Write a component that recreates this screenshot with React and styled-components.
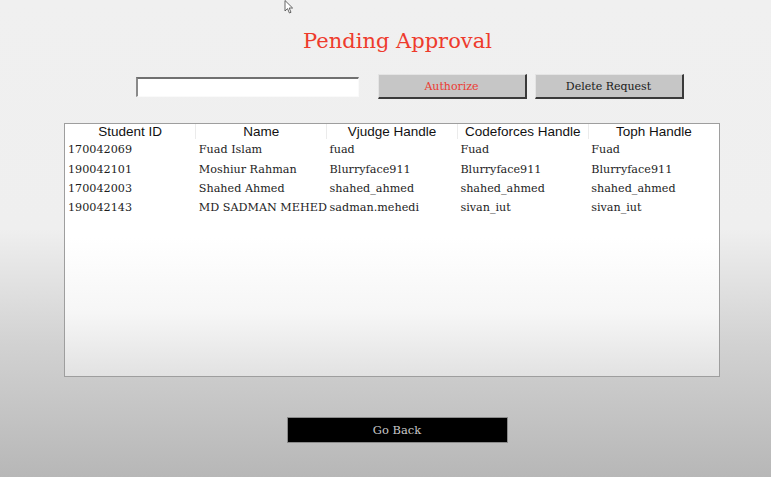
import React from "react";
import styled, { createGlobalStyle } from "styled-components";

const GlobalStyle = createGlobalStyle`
  html, body {
    margin: 0;
    padding: 0;
  }
  body {
    font-family: "DejaVu Serif", "Liberation Serif", serif;
    background: linear-gradient(to bottom, #f0f0f0 0%, #efefef 48%, #d2d2d2 72%, #b7b7b7 100%);
    min-height: 100vh;
  }
`;

const Page = styled.div`
  position: relative;
  width: 771px;
  height: 477px;
  display: flex;
  flex-direction: column;
  align-items: center;
  box-sizing: border-box;
  padding-top: 26px;
`;

const Title = styled.h1`
  margin: 0;
  font-family: "DejaVu Serif", "Liberation Serif", serif;
  font-weight: normal;
  font-size: 21px;
  color: #ee3b2c;
  line-height: 30px;
  margin-left: 24px;
`;

const Toolbar = styled.div`
  display: flex;
  align-items: center;
  margin-top: 18px;
  margin-left: 48px;
  gap: 8px;
`;

const SearchInput = styled.input`
  width: 223px;
  height: 20px;
  box-sizing: border-box;
  margin-right: 11px;
  border: none;
  border-top: 2px solid #707070;
  border-left: 2px solid #8a8a8a;
  border-bottom: 1px solid #fafafa;
  border-right: 1px solid #fafafa;
  background: #fff;
  outline: none;
`;

const ToolButton = styled.button`
  width: 149px;
  height: 25px;
  box-sizing: border-box;
  background: #c6c6c6;
  border: none;
  border-top: 1px solid #e4e4e4;
  border-left: 1px solid #e4e4e4;
  border-right: 2px solid #3a3a3a;
  border-bottom: 2px solid #3a3a3a;
  font-family: "DejaVu Serif", "Liberation Serif", serif;
  font-size: 11px;
  color: ${(p) => (p.$danger ? "#ec3a32" : "#1a1a1a")};
  padding: 0;
`;

const Panel = styled.div`
  width: 656px;
  height: 254px;
  margin-top: 24px;
  box-sizing: border-box;
  border: 1px solid #9e9e9e;
  background: linear-gradient(to bottom, #ffffff 0%, #ffffff 45%, #f6f6f6 75%, #e2e2e2 100%);
  margin-left: 13px;
`;

const Table = styled.table`
  border-collapse: collapse;
  table-layout: fixed;
  width: 100%;
`;

const HeadCell = styled.th`
  height: 15px;
  padding: 0;
  font-family: "Liberation Sans", Arial, sans-serif;
  font-weight: normal;
  font-size: 13.5px;
  color: #111;
  text-align: center;
  background: #fff;
  border-right: 1px solid #ebebeb;
  line-height: 15px;
  white-space: nowrap;
  overflow: hidden;
  &:last-child {
    border-right: none;
  }
`;

const Cell = styled.td`
  padding: 0 0 0 3px;
  height: 19.4px;
  font-size: 11.2px;
  color: #1d1d1d;
  white-space: nowrap;
  overflow: hidden;
  text-overflow: clip;
  vertical-align: middle;
`;

const FirstRow = styled.tr`
  td {
    padding-top: 1px;
  }
`;

const BackButton = styled.button`
  width: 221px;
  height: 26px;
  margin-top: 40px;
  margin-left: 23px;
  box-sizing: border-box;
  background: #000;
  border: 1px solid #8a8a8a;
  color: #c9c9c9;
  font-family: "DejaVu Serif", "Liberation Serif", serif;
  font-size: 11.5px;
  padding: 0;
`;

const Pointer = styled.svg`
  position: absolute;
  left: 284px;
  top: 0;
`;

const columns = ["Student ID", "Name", "Vjudge Handle", "Codeforces Handle", "Toph Handle"];

const rows = [
  ["170042069", "Fuad Islam", "fuad", "Fuad", "Fuad"],
  ["190042101", "Moshiur Rahman", "Blurryface911", "Blurryface911", "Blurryface911"],
  ["170042003", "Shahed Ahmed", "shahed_ahmed", "shahed_ahmed", "shahed_ahmed"],
  ["190042143", "MD SADMAN MEHEDI", "sadman.mehedi", "sivan_iut", "sivan_iut"],
];

export default function App() {
  return (
    <>
      <GlobalStyle />
      <Page>
        <Pointer width="10" height="14" viewBox="0 0 10 14">
          <path d="M1 0.5 L1 11 L3.5 8.6 L5.4 13 L7 12.3 L5.2 8 L8.6 8 Z" fill="#fff" stroke="#555" strokeWidth="0.9" />
        </Pointer>
        <Title>Pending Approval</Title>
        <Toolbar>
          <SearchInput type="text" />
          <ToolButton $danger>Authorize</ToolButton>
          <ToolButton>Delete Request</ToolButton>
        </Toolbar>
        <Panel>
          <Table>
            <thead>
              <tr>
                {columns.map((c) => (
                  <HeadCell key={c}>{c}</HeadCell>
                ))}
              </tr>
            </thead>
            <tbody>
              {rows.map((r, i) => {
                const Row = i === 0 ? FirstRow : "tr";
                return (
                  <Row key={r[0]}>
                    {r.map((v, j) => (
                      <Cell key={j}>{v}</Cell>
                    ))}
                  </Row>
                );
              })}
            </tbody>
          </Table>
        </Panel>
        <BackButton>Go Back</BackButton>
      </Page>
    </>
  );
}
